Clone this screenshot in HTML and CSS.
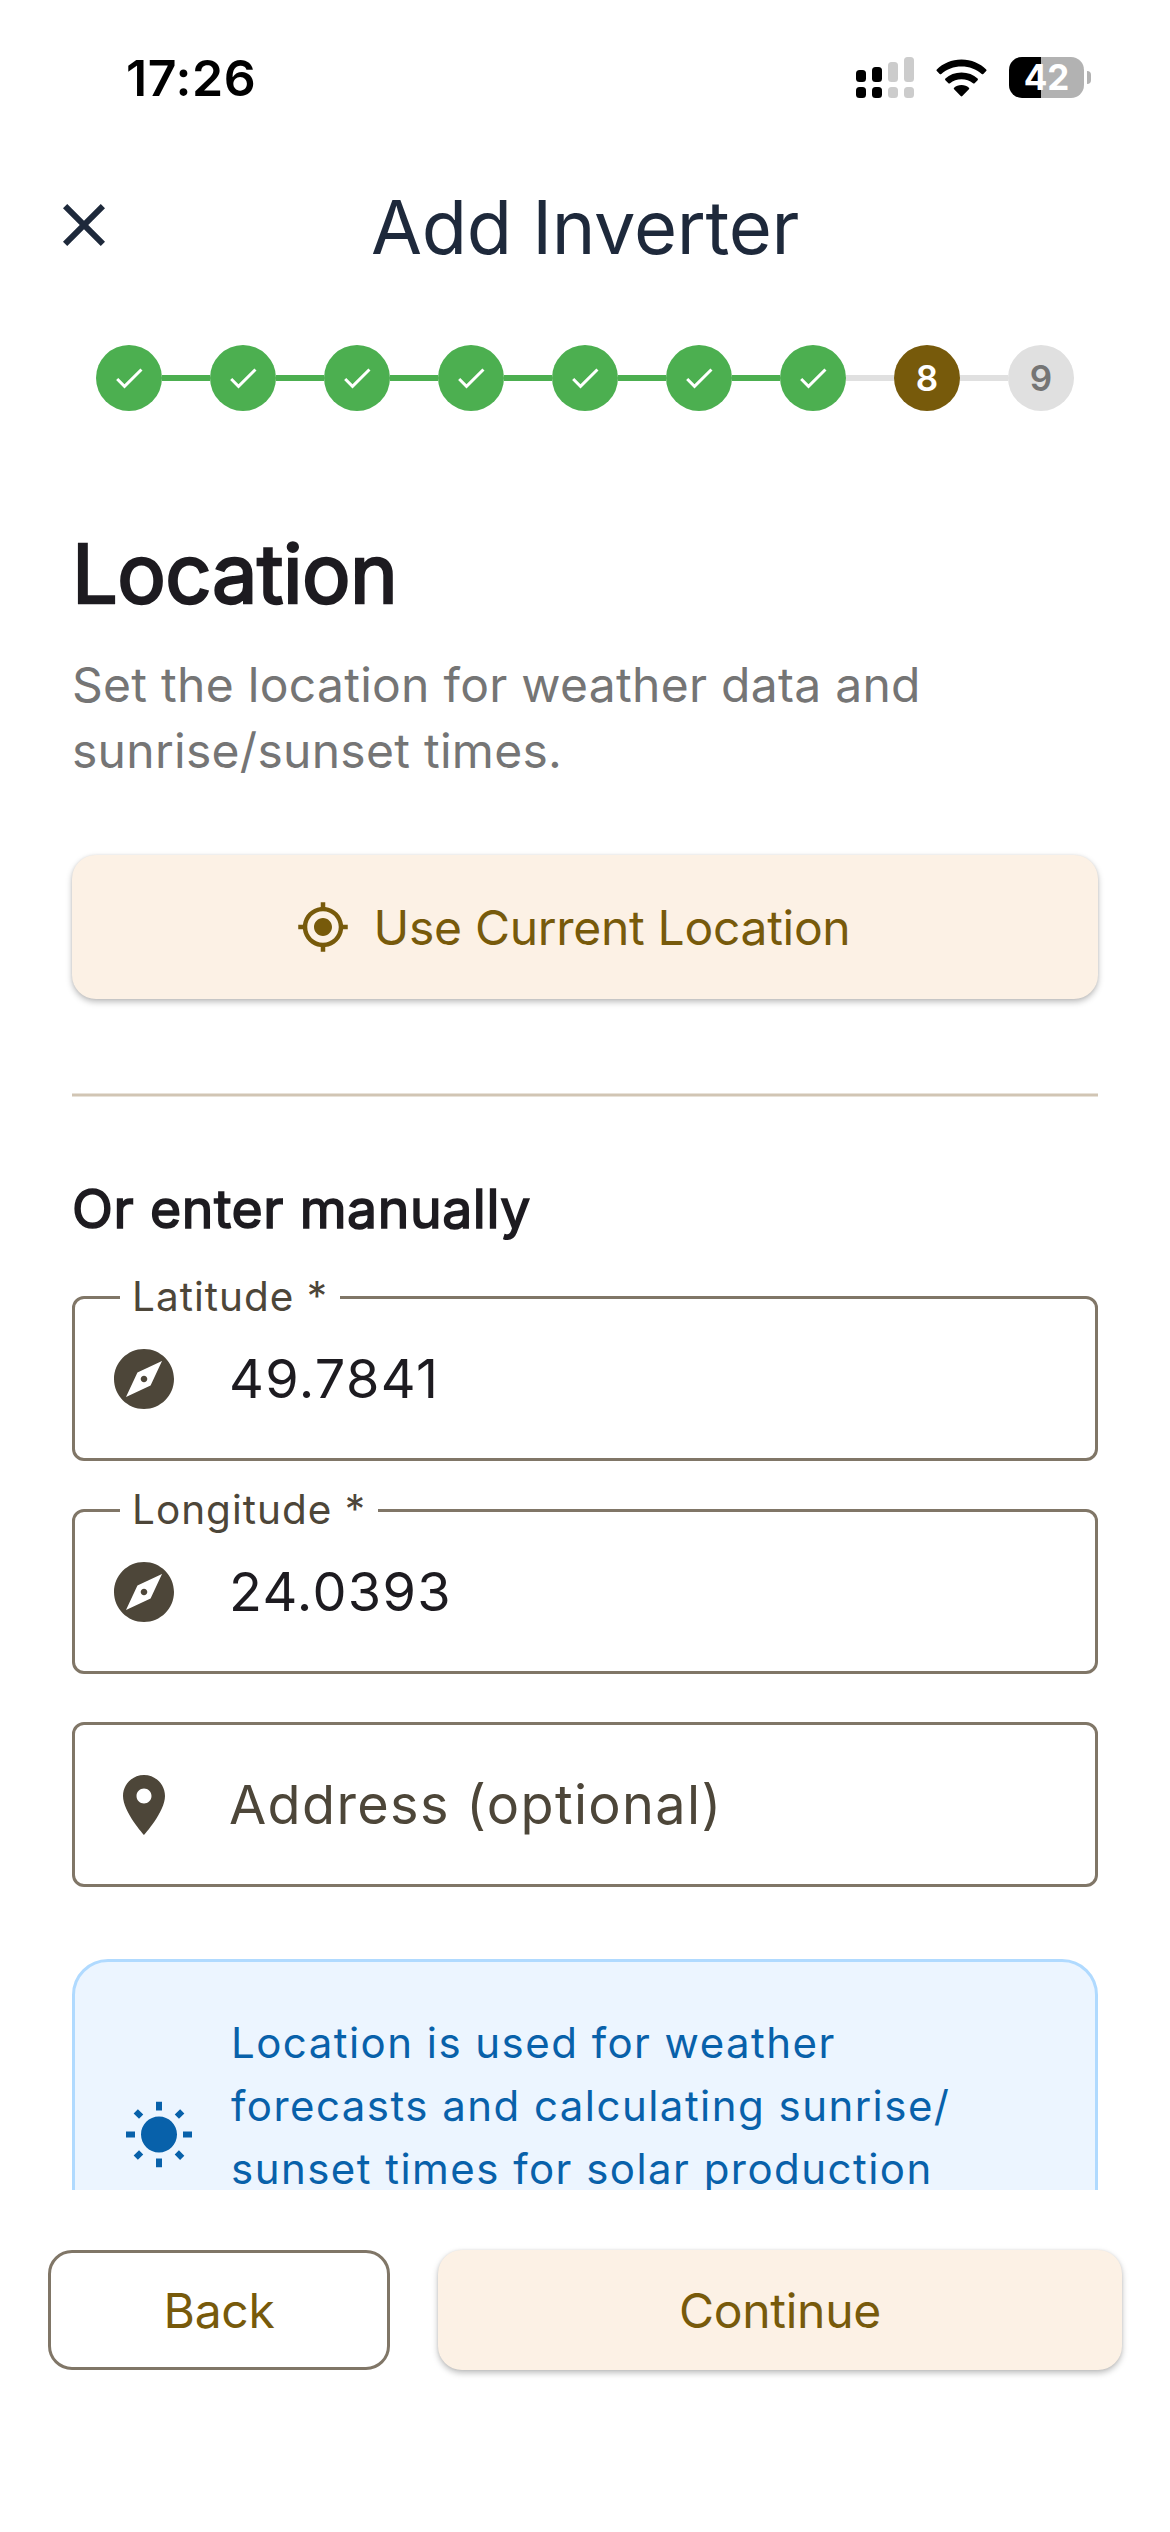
FILE: index.html
```html
<!DOCTYPE html>
<html lang="en">
<head>
  <meta charset="UTF-8">
  <meta name="viewport" content="width=device-width, initial-scale=1.0">
  <title>Add Inverter</title>
  <link rel="stylesheet" href="styles.css">
</head>
<body>
  <div class="screen">
    <!-- Status Bar -->
    <div class="status-bar">
      <span class="time">17:26</span>
      <div class="status-icons">
        <svg class="signal" viewBox="0 0 58 41">
          <g fill="#000">
            <rect x="0" y="13" width="10" height="12" rx="3.5"/>
            <rect x="0" y="30" width="10" height="11" rx="3.5"/>
            <rect x="16" y="10" width="10" height="15" rx="3.5"/>
            <rect x="16" y="30" width="10" height="11" rx="3.5"/>
          </g>
          <g fill="#ccc">
            <rect x="32" y="5" width="10" height="20" rx="3.5"/>
            <rect x="32" y="30" width="10" height="11" rx="3.5"/>
            <rect x="48" y="0" width="10" height="25" rx="3.5"/>
            <rect x="48" y="30" width="10" height="11" rx="3.5"/>
          </g>
        </svg>
        <svg class="wifi" viewBox="0 0 51 38">
          <path d="M25.5 0.5C35.5 0.5 44 4.500 50.200 10.400Q51 11.200 50.200 12L47.300 15Q46.500 15.700 45.700 15C40.200 10 33.300 7.500 25.500 7.500S10.800 10 5.300 15Q4.500 15.700 3.700 15L.8 12Q0 11.200.8 10.400C7 4.500 15.500.5 25.500.5z"/>
          <path d="M25.500 13.500C32 13.500 37.400 15.800 41.600 19.600Q42.400 20.400 41.600 21.200L38.600 24.200Q37.800 24.900 37 24.200C33.800 21.500 29.900 20.200 25.500 20.200S17.200 21.500 14 24.200Q13.200 24.900 12.400 24.200L9.400 21.200Q8.600 20.400 9.400 19.600C13.600 15.800 19 13.500 25.500 13.500z"/>
          <path d="M25.500 26C28.500 26 31 27 32.900 28.700Q33.700 29.500 32.900 30.300L26.300 37Q25.500 37.800 24.700 37L18.100 30.300Q17.300 29.500 18.100 28.700C20 27 22.500 26 25.500 26z"/>
        </svg>
        <div class="battery">
          <span class="battery-body">42</span>
          <span class="battery-cap"></span>
        </div>
      </div>
    </div>

    <!-- App Bar -->
    <div class="app-bar">
      <svg class="icon" viewBox="0 0 24 24"><path d="M19 6.410L17.590 5 12 10.590 6.410 5 5 6.410 10.590 12 5 17.590 6.410 19 12 13.410 17.590 19 19 17.590 13.410 12z"/></svg>
      <h1 class="title">Add Inverter</h1>
    </div>

    <!-- Stepper -->
    <div class="stepper">
      <div class="step done"><svg viewBox="0 0 24 24"><path d="M9 16.170L4.830 12l-1.420 1.410L9 19 21 7l-1.410-1.410z"/></svg></div>
      <div class="line done"></div>
      <div class="step done"><svg viewBox="0 0 24 24"><path d="M9 16.170L4.830 12l-1.420 1.410L9 19 21 7l-1.410-1.410z"/></svg></div>
      <div class="line done"></div>
      <div class="step done"><svg viewBox="0 0 24 24"><path d="M9 16.170L4.830 12l-1.420 1.410L9 19 21 7l-1.410-1.410z"/></svg></div>
      <div class="line done"></div>
      <div class="step done"><svg viewBox="0 0 24 24"><path d="M9 16.170L4.830 12l-1.420 1.410L9 19 21 7l-1.410-1.410z"/></svg></div>
      <div class="line done"></div>
      <div class="step done"><svg viewBox="0 0 24 24"><path d="M9 16.170L4.830 12l-1.420 1.410L9 19 21 7l-1.410-1.410z"/></svg></div>
      <div class="line done"></div>
      <div class="step done"><svg viewBox="0 0 24 24"><path d="M9 16.170L4.830 12l-1.420 1.410L9 19 21 7l-1.410-1.410z"/></svg></div>
      <div class="line done"></div>
      <div class="step done"><svg viewBox="0 0 24 24"><path d="M9 16.170L4.830 12l-1.420 1.410L9 19 21 7l-1.410-1.410z"/></svg></div>
      <div class="line"></div>
      <div class="step current">8</div>
      <div class="line"></div>
      <div class="step">9</div>
    </div>

    <!-- Content -->
    <div class="content">
      <h2 class="heading">Location</h2>
      <p class="description">Set the location for weather data and sunrise/sunset times.</p>

      <button class="btn btn-filled btn-location">
        <svg viewBox="0 0 24 24"><path d="M12 8c-2.210 0-4 1.790-4 4s1.790 4 4 4 4-1.790 4-4-1.790-4-4-4zm8.940 3c-.46-4.170-3.770-7.480-7.940-7.940V1h-2v2.060C6.830 3.520 3.520 6.830 3.060 11H1v2h2.060c.46 4.170 3.770 7.480 7.940 7.940V23h2v-2.060c4.170-.46 7.480-3.770 7.940-7.940H23v-2h-2.060zM12 19c-3.870 0-7-3.130-7-7s3.130-7 7-7 7 3.130 7 7-3.130 7-7 7z"/></svg>
        <span>Use Current Location</span>
      </button>

      <div class="divider"></div>

      <h3 class="subheading">Or enter manually</h3>

      <div class="fields">
        <fieldset class="field labelled">
          <legend>Latitude *</legend>
          <div class="field-row">
            <svg class="icon" viewBox="0 0 24 24"><path d="M12 10.900c-.61 0-1.100.49-1.100 1.100s.49 1.100 1.100 1.100c.61 0 1.100-.49 1.100-1.100s-.49-1.100-1.100-1.100zM12 2C6.480 2 2 6.480 2 12s4.480 10 10 10 10-4.480 10-10S17.520 2 12 2zm2.190 12.190L6 18l3.810-8.190L18 6l-3.810 8.190z"/></svg>
            <span class="value">49.7841</span>
          </div>
        </fieldset>
        <fieldset class="field labelled">
          <legend>Longitude *</legend>
          <div class="field-row">
            <svg class="icon" viewBox="0 0 24 24"><path d="M12 10.900c-.61 0-1.100.49-1.100 1.100s.49 1.100 1.100 1.100c.61 0 1.100-.49 1.100-1.100s-.49-1.100-1.100-1.100zM12 2C6.480 2 2 6.480 2 12s4.480 10 10 10 10-4.480 10-10S17.520 2 12 2zm2.190 12.190L6 18l3.810-8.190L18 6l-3.810 8.190z"/></svg>
            <span class="value">24.0393</span>
          </div>
        </fieldset>
        <div class="field">
          <div class="field-row">
            <svg class="icon" viewBox="0 0 24 24"><path d="M12 2C8.130 2 5 5.130 5 9c0 5.250 7 13 7 13s7-7.750 7-13c0-3.870-3.130-7-7-7zm0 9.500c-1.380 0-2.500-1.120-2.500-2.500s1.120-2.500 2.500-2.500 2.500 1.120 2.500 2.500-1.120 2.500-2.500 2.500z"/></svg>
            <span class="placeholder">Address (optional)</span>
          </div>
        </div>
      </div>

      <div class="info">
        <svg class="icon" viewBox="0 0 24 24"><path d="M6.760 4.840l-1.800-1.790-1.410 1.410 1.790 1.790 1.420-1.410zM4 10.500H1v2h3v-2zm9-9.950h-2V3.500h2V.55zm7.450 3.910l-1.410-1.410-1.790 1.790 1.410 1.410 1.790-1.790zm-3.210 13.700l1.790 1.800 1.410-1.410-1.800-1.790-1.400 1.400zM20 10.500v2h3v-2h-3zm-8-5c-3.310 0-6 2.690-6 6s2.690 6 6 6 6-2.690 6-6-2.690-6-6-6zm-1 16.950h2V19.500h-2v2.950zm-7.450-3.910l1.410 1.410 1.790-1.800-1.410-1.410-1.790 1.800z"/></svg>
        <p>Location is used for weather<br>forecasts and calculating sunrise/<br>sunset times for solar production</p>
      </div>
    </div>

    <!-- Bottom Buttons -->
    <div class="footer">
      <button class="btn btn-outlined">Back</button>
      <button class="btn btn-filled">Continue</button>
    </div>
  </div>
</body>
</html>
```

FILE: styles.css
```css
* {
  margin: 0;
  padding: 0;
  box-sizing: border-box;
}

body {
  background: #fff;
  font-family: 'Inter', sans-serif;
  font-weight: 400;
}

svg {
  display: block;
  fill: currentColor;
  flex-shrink: 0;
}

.screen {
  width: 1170px;
  height: 2532px;
  display: flex;
  flex-direction: column;
  overflow: hidden;
}

.icon {
  width: 72px;
  height: 72px;
}

/* Status Bar */
.status-bar {
  height: 141px;
  flex-shrink: 0;
  display: flex;
  justify-content: space-between;
  align-items: center;
  padding: 14px 79px 0 126px;
  color: #000;
}

.time {
  font-size: 50px;
  font-weight: 600;
  letter-spacing: 0.6px;
}

.status-icons {
  display: flex;
  align-items: center;
}

.signal {
  width: 58px;
  height: 41px;
}

.wifi {
  width: 51px;
  height: 38px;
  margin: 0 22px;
}

.battery {
  display: flex;
  align-items: center;
  gap: 3px;
}

.battery-body {
  width: 75px;
  height: 41px;
  border-radius: 13px;
  background: linear-gradient(to right, #000 32px, #b2b2b2 32px);
  color: #fff;
  font-size: 35px;
  font-weight: 700;
  line-height: 41px;
  text-align: center;
}

.battery-cap {
  width: 4px;
  height: 13px;
  border-radius: 0 4px 4px 0;
  background: #b2b2b2;
}

/* App Bar */
.app-bar {
  height: 168px;
  flex-shrink: 0;
  display: flex;
  align-items: center;
  padding: 0 120px 0 48px;
  color: #1e293b;
}

.title {
  flex: 1;
  padding-top: 3px;
  text-align: center;
  font-size: 74px;
  font-weight: 400;
  letter-spacing: -0.3px;
}

/* Stepper */
.stepper {
  flex-shrink: 0;
  display: flex;
  align-items: center;
  padding: 36px 96px 0;
}

.step {
  width: 66px;
  height: 66px;
  border-radius: 50%;
  background: #e0e0e0;
  color: #757575;
  font-size: 35px;
  font-weight: 600;
  display: flex;
  align-items: center;
  justify-content: center;
}

.step svg {
  width: 36px;
  height: 36px;
}

.step.done {
  background: #4caf50;
  color: #fff;
}

.step.current {
  background: #775a0b;
  color: #fff;
}

.line {
  flex: 1;
  height: 6px;
  background: #e0e0e0;
}

.line.done {
  background: #4caf50;
}

/* Content */
.content {
  height: 1779px;
  flex-shrink: 0;
  overflow: hidden;
  padding: 109px 72px 0;
}

.heading {
  color: #1d1b20;
  font-size: 81px;
  font-weight: 400;
  line-height: 108px;
  letter-spacing: -0.5px;
  -webkit-text-stroke: 2.4px #1d1b20;
}

.description {
  margin-top: 24px;
  color: #757575;
  font-size: 48px;
  line-height: 66px;
  letter-spacing: 0.28px;
}

.btn {
  border: none;
  border-radius: 24px;
  color: #775a0b;
  font-family: inherit;
  font-size: 48px;
  letter-spacing: -0.3px;
  display: flex;
  align-items: center;
  justify-content: center;
}

.btn-filled {
  background: #fcf1e5;
  box-shadow: 0 3px 6px rgba(0, 0, 0, 0.26), 0 0 3px rgba(0, 0, 0, 0.08);
}

.btn-location {
  width: 100%;
  height: 144px;
  margin-top: 71px;
  padding-right: 24px;
  gap: 24px;
}

.btn-location svg {
  width: 54px;
  height: 54px;
}

.divider {
  height: 4px;
  margin-top: 94px;
  background: #d1c5b4;
  border-top: 1px solid #e8e2d9;
  border-bottom: 1px solid #e8e2d9;
}

.subheading {
  margin-top: 72px;
  color: #1d1b20;
  font-size: 53.5px;
  font-weight: 400;
  line-height: 79px;
  letter-spacing: 0.6px;
  -webkit-text-stroke: 1.6px #1d1b20;
}

/* Fields */
.fields {
  display: flex;
  flex-direction: column;
  gap: 48px;
  margin-top: 48px;
}

.field {
  height: 165px;
  border: 3px solid #807667;
  border-radius: 12px;
  padding: 0 33px;
  color: #4d4639;
}

.field.labelled {
  height: 188px;
  margin-top: -23px;
}

.field legend {
  height: 49px;
  margin-left: 12px;
  padding: 0 12px;
  font-size: 40.5px;
  line-height: 47px;
  letter-spacing: 1px;
}

.field-row {
  height: 160px;
  display: flex;
  align-items: center;
  gap: 49px;
  font-size: 54px;
  letter-spacing: 1.35px;
}

.field-row span {
  padding-bottom: 2px;
}

.labelled .field-row {
  height: 114px;
}

.value {
  color: #1d1b20;
}

/* Info Box */
.info {
  height: 354px;
  margin-top: 72px;
  padding: 0 48px;
  display: flex;
  align-items: flex-start;
  gap: 36px;
  border: 3px solid #b0daff;
  border-radius: 36px;
  background: #ecf5ff;
  color: #0861aa;
}

.info .icon {
  margin-top: 138px;
}

.info p {
  margin-top: 49px;
  font-size: 42px;
  line-height: 63px;
  letter-spacing: 1.46px;
}

/* Footer */
.footer {
  flex: 1;
  display: grid;
  grid-template-columns: 1fr 2fr;
  align-items: start;
  gap: 48px;
  padding: 60px 48px 0;
  background: #fff;
}

.footer .btn {
  height: 120px;
}

.footer .btn-outlined {
  background: transparent;
  border: 3px solid #807667;
}
```
